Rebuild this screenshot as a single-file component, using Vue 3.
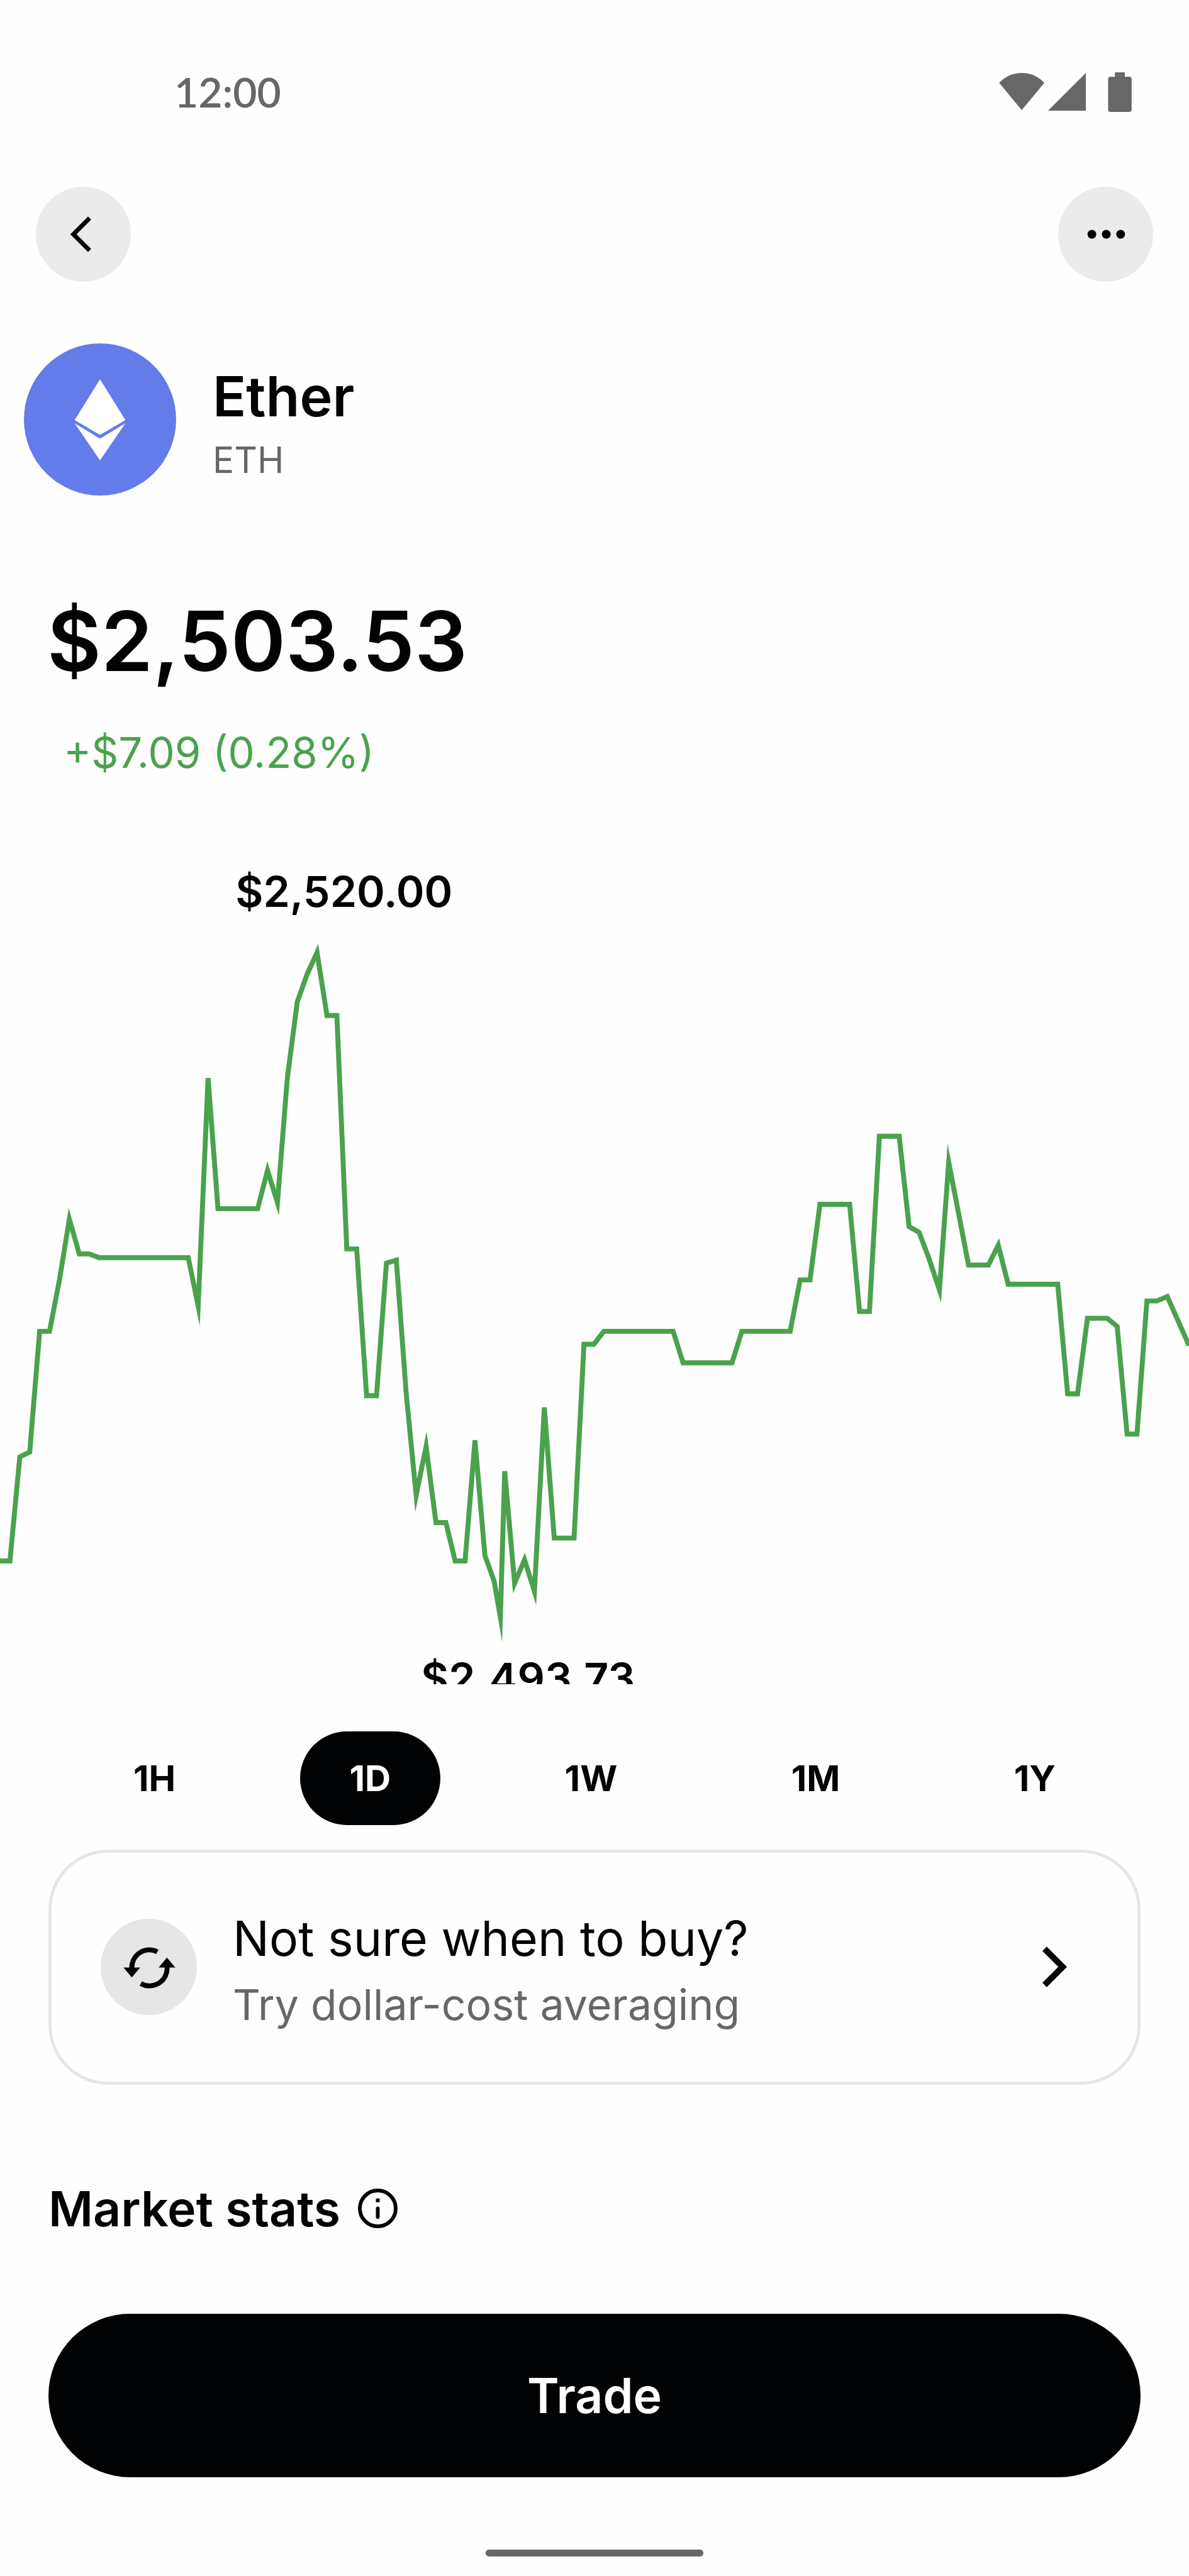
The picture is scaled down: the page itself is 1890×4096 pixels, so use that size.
<script setup>
import { ref } from 'vue'

const ranges = ['1H', '1D', '1W', '1M', '1Y']
const activeRange = ref('1D')

// Price series for the selected day, in chart units
const series = [
  [0, 1022], [16, 1022], [32, 854], [48, 846], [64, 651], [80, 651], [96, 568], [112, 470],
  [128, 526], [144, 526], [160, 532], [304, 532], [320, 610], [336, 242], [352, 453], [416, 453],
  [432, 391], [448, 443], [464, 242], [480, 119], [496, 74], [512, 39], [528, 141], [544, 141],
  [560, 518], [576, 518], [592, 755], [608, 755], [624, 541], [640, 536], [656, 752], [672, 916],
  [688, 837], [704, 960], [720, 960], [735, 1022], [751, 1022], [767, 827], [783, 1013],
  [798, 1055], [808, 1113], [815, 877], [831, 1058], [847, 1020], [863, 1071], [879, 774],
  [895, 985], [927, 985], [943, 672], [959, 672], [975, 651], [1087, 651], [1103, 702],
  [1182, 702], [1198, 651], [1276, 651], [1292, 568], [1308, 568], [1324, 446], [1372, 446],
  [1388, 619], [1404, 619], [1420, 336], [1452, 336], [1468, 482], [1484, 491], [1500, 533],
  [1517, 584], [1532, 378], [1564, 544], [1596, 544], [1612, 512], [1628, 575], [1708, 575],
  [1724, 752], [1740, 752], [1756, 630], [1788, 630], [1804, 643], [1820, 817], [1836, 817],
  [1852, 602], [1868, 602], [1885, 595], [1920, 674]
]
const linePoints = series.map((p) => p.join(',')).join(' ')
</script>

<template>
  <main class="screen">
    <div class="status">
      <span class="clock">12:00</span>
      <svg class="status-icons" viewBox="0 0 214 64" aria-hidden="true">
        <path d="M0 17Q15 1 36.500 1T73 17L36.500 61Z" />
        <path d="M79 62 140 1V62Z" />
        <path d="M187 0h16v7h7a4 4 0 0 1 4 4v49a4 4 0 0 1-4 4h-30a4 4 0 0 1-4-4V11a4 4 0 0 1 4-4h7Z" />
      </svg>
    </div>

    <header class="toolbar">
      <button class="round" type="button" aria-label="Back">
        <svg class="round-icon" viewBox="0 0 152 152" aria-hidden="true">
          <path d="M86 50 60 76l26 26" fill="none" stroke="currentColor" stroke-width="7" />
        </svg>
      </button>
      <button class="round" type="button" aria-label="More options">
        <svg class="round-icon" viewBox="0 0 152 152" aria-hidden="true">
          <circle cx="54" cy="76" r="7" />
          <circle cx="77" cy="76" r="7" />
          <circle cx="100" cy="76" r="7" />
        </svg>
      </button>
    </header>

    <section class="asset">
      <svg class="coin" viewBox="0 0 246 246" aria-hidden="true">
        <circle cx="123" cy="123" r="123" fill="#647ce9" />
        <path d="M123 58 164 124 123 148 82 124Z" fill="#fff" />
        <path d="M82 129 123 154 164 129 123 189Z" fill="#fff" />
      </svg>
      <div class="asset-text">
        <h1 class="name">Ether</h1>
        <p class="symbol">ETH</p>
      </div>
    </section>

    <section class="quote">
      <p class="price">$2,503.53</p>
      <p class="change">+$7.09 (0.28%)</p>
    </section>

    <section class="chart" aria-label="Price chart">
      <p class="mark high">$2,520.00</p>
      <svg class="plot" viewBox="0 0 1920 1168" aria-hidden="true">
        <polyline :points="linePoints" />
      </svg>
      <div class="low-clip">
        <p class="mark low">$2,493.73</p>
      </div>
    </section>

    <nav class="ranges" aria-label="Time range">
      <button
        v-for="range in ranges"
        :key="range"
        type="button"
        class="range"
        :class="{ active: range === activeRange }"
        :aria-pressed="range === activeRange"
        @click="activeRange = range"
      >{{ range }}</button>
    </nav>

    <a class="tip" href="#averaging">
      <svg class="tip-icon" viewBox="0 0 156 156" aria-hidden="true">
        <circle cx="78" cy="78" r="78" fill="#e6e6e6" />
        <g fill="none" stroke="#010204" stroke-width="8">
          <path d="M50.500 80A28.500 28.500 0 0 1 92 53.500" />
          <path d="M107.500 77A28.500 28.500 0 0 1 65 105" />
        </g>
        <path d="M37 79h27L50.500 95Z" fill="#010204" />
        <path d="M94 79h27L107.500 63Z" fill="#010204" />
      </svg>
      <span class="tip-text">
        <span class="tip-title">Not sure when to buy?</span>
        <span class="tip-sub">Try dollar-cost averaging</span>
      </span>
      <svg class="tip-arrow" viewBox="0 0 40 66" aria-hidden="true">
        <path d="M3.500 3.500 33 33 3.500 62.500" fill="none" stroke="#010204" stroke-width="10" />
      </svg>
    </a>

    <section class="stats">
      <h2 class="stats-title">Market stats</h2>
      <button class="info" type="button" aria-label="About market stats">
        <svg class="info-icon" viewBox="0 0 64 64" aria-hidden="true">
          <circle cx="32" cy="32" r="29" fill="none" stroke="currentColor" stroke-width="6" />
          <rect x="29" y="16" width="6" height="6" />
          <rect x="29" y="29" width="6" height="20" rx="3" />
        </svg>
      </button>
    </section>

    <footer class="footer">
      <button class="trade" type="button">Trade</button>
      <div class="home-bar"></div>
    </footer>
  </main>
</template>

<style>
body {
  margin: 0;
  background: #fefefe;
}
</style>

<style scoped>
.screen {
  display: flex;
  flex-direction: column;
  color: #010204;
  font-family: Inter, "Liberation Sans", sans-serif;
}

h1,
h2,
p {
  margin: 0;
}

button {
  padding: 0;
  border: 0;
  background: none;
  color: inherit;
  font: inherit;
  cursor: pointer;
}

svg {
  display: block;
  flex: none;
}

.status {
  display: flex;
  align-items: center;
  justify-content: space-between;
  padding: 106px 91px 111px 277px;
  color: #666867;
}

.clock {
  font-family: Lato, sans-serif;
  font-size: 66px;
  font-weight: 600;
  line-height: 80px;
}

.status-icons {
  width: 211px;
  height: 63px;
  fill: currentColor;
}

.toolbar {
  display: flex;
  justify-content: space-between;
  padding: 0 57px;
}

.round {
  width: 151px;
  height: 151px;
  border-radius: 50%;
  background: #ebebeb;
}

.round-icon {
  width: 151px;
  height: 151px;
}

.asset {
  display: flex;
  gap: 58px;
  padding: 98px 38px 0;
}

.coin {
  width: 242px;
  height: 242px;
}

.asset-text {
  padding-top: 26px;
}

.name {
  font-size: 88px;
  font-weight: 600;
  line-height: 116px;
}

.symbol {
  color: #666867;
  font-size: 57px;
  line-height: 88px;
}

.quote {
  padding: 151px 75px 0;
}

.price {
  font-size: 132px;
  font-weight: 600;
  line-height: 160px;
}

.change {
  padding: 56px 26px 0;
  color: #4aa24d;
  font-size: 67px;
  line-height: 84px;
}

.chart {
  padding-top: 136px;
}

.mark {
  font-size: 68px;
  font-weight: 600;
  line-height: 84px;
}

.high {
  padding-left: 19.8%;
}

.plot {
  width: 100%;
  margin-top: 17px;
}

.plot polyline {
  fill: none;
  stroke: #4aa24d;
  stroke-width: 8;
  stroke-miterlimit: 11;
}

.low-clip {
  height: 52px;
  overflow: hidden;
}

.low {
  padding-left: 35.4%;
}

.ranges {
  display: flex;
  justify-content: space-between;
  padding: 75px 133px 0;
}

.range {
  height: 149px;
  padding: 0 79px;
  border-radius: 75px;
  font-size: 57px;
  font-weight: 700;
}

.range.active {
  background: #010204;
  color: #fff;
}

.tip {
  display: flex;
  align-items: center;
  gap: 57px;
  margin: 39px 77px 0;
  padding: 77px 112px 77px 78px;
  border: 5px solid #e6e6e6;
  border-radius: 95px;
  color: inherit;
  text-decoration: none;
}

.tip-icon {
  width: 153px;
  height: 153px;
}

.tip-text {
  display: flex;
  flex: 1;
  flex-direction: column;
}

.tip-title {
  font-size: 77px;
  line-height: 118px;
}

.tip-sub {
  color: #666867;
  font-size: 68px;
  line-height: 92px;
}

.tip-arrow {
  width: 39px;
  height: 65px;
}

.stats {
  display: flex;
  align-items: center;
  gap: 28px;
  padding: 149px 77px 0;
}

.stats-title {
  font-size: 77px;
  font-weight: 600;
  line-height: 96px;
}

.info-icon {
  width: 63px;
  height: 63px;
  fill: currentColor;
}

.footer {
  display: flex;
  flex-direction: column;
  align-items: center;
  gap: 115px;
  padding: 119px 77px 30px;
}

.trade {
  width: 100%;
  height: 260px;
  border-radius: 130px;
  background: #010204;
  color: #fff;
  font-size: 77px;
  font-weight: 600;
}

.home-bar {
  width: 346px;
  height: 11px;
  border-radius: 5px;
  background: #666867;
}
</style>
